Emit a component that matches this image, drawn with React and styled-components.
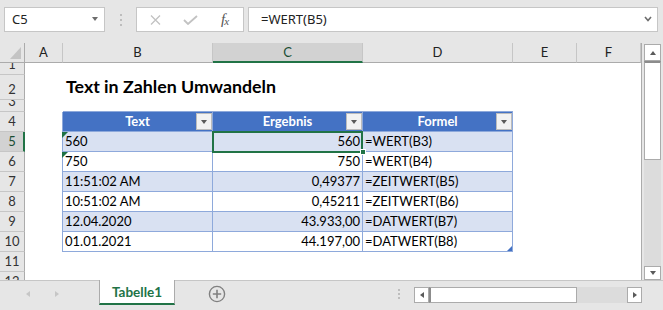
import React from "react";
import styled, { createGlobalStyle, css } from "styled-components";

const GlobalStyle = createGlobalStyle`
  html, body {
    margin: 0;
    padding: 0;
    background: #e6e6e6;
  }
  body {
    overflow: hidden;
    font-family: "Lato", "Liberation Sans", sans-serif;
  }
`;

const tableData = [
  { text: "560", value: "560", formula: "=WERT(B3)", flag: true },
  { text: "750", value: "750", formula: "=WERT(B4)", flag: true },
  { text: "11:51:02 AM", value: "0,49377", formula: "=ZEITWERT(B5)" },
  { text: "10:51:02 AM", value: "0,45211", formula: "=ZEITWERT(B6)" },
  { text: "12.04.2020", value: "43.933,00", formula: "=DATWERT(B7)" },
  { text: "01.01.2021", value: "44.197,00", formula: "=DATWERT(B8)" },
];

const columns = ["A", "B", "C", "D", "E", "F"];

function App() {
  const blanks = (count, key) =>
    Array.from({ length: count }, (_, i) => <Cell key={key + i} />);

  return (
    <Window>
      <GlobalStyle />
      <FormulaBar>
        <NameBox>
          <span>C5</span>
          <Tri $dir="down" $color="#6d6d6d" />
        </NameBox>
        <Grip />
        <FxBox>
          <svg width="11" height="10" viewBox="0 0 11 10">
            <path d="M1 0.5 L10 9.5 M10 0.5 L1 9.5" stroke="#c2c2c2" strokeWidth="1.3" fill="none" />
          </svg>
          <svg width="15" height="10" viewBox="0 0 15 10">
            <path d="M1 5 L5 9 L14 1" stroke="#c2c2c2" strokeWidth="1.8" fill="none" />
          </svg>
          <FxLabel>
            f<sub>x</sub>
          </FxLabel>
        </FxBox>
        <FormulaInput>
          <span>=WERT(B5)</span>
          <svg width="8" height="6" viewBox="0 0 8 6">
            <path d="M1 1 L4 4.5 L7 1" stroke="#6d6d6d" strokeWidth="1.6" fill="none" />
          </svg>
        </FormulaInput>
      </FormulaBar>

      <Main>
        <Sheet>
          <Corner />
          {columns.map((c) => (
            <ColHead key={c} $active={c === "C"}>
              {c}
            </ColHead>
          ))}

          <RowHead>1</RowHead>
          {blanks(6, "r1")}

          <RowHead>2</RowHead>
          <Cell />
          <Title>Text in Zahlen Umwandeln</Title>
          {blanks(4, "r2")}

          <RowHead>3</RowHead>
          {blanks(6, "r3")}

          <RowHead>4</RowHead>
          <Cell />
          {["Text", "Ergebnis", "Formel"].map((h, i) => (
            <TableCell key={h} $head $first={i === 0} $align="center">
              {h}
              <FilterBtn>
                <Tri $dir="down" $color="#5a5a5a" />
              </FilterBtn>
            </TableCell>
          ))}
          {blanks(2, "r4")}

          {tableData.map((row, i) => {
            const n = i + 5;
            const band = i % 2 === 0;
            return (
              <React.Fragment key={n}>
                <RowHead $active={n === 5}>{n}</RowHead>
                <Cell />
                <TableCell $band={band} $first $flag={row.flag}>
                  {row.text}
                </TableCell>
                <TableCell $band={band} $align="right" $selected={n === 5}>
                  {row.value}
                </TableCell>
                <TableCell $band={band} $corner={n === 10}>
                  {row.formula}
                </TableCell>
                {blanks(2, "r" + n)}
              </React.Fragment>
            );
          })}

          <RowHead>11</RowHead>
          {blanks(6, "r11")}
          <RowHead>12</RowHead>
          {blanks(6, "r12")}
        </Sheet>

        <VScroll>
          <ScrollBtn $h={17}>
            <Tri $dir="up" $color="#5a5a5a" />
          </ScrollBtn>
          <VThumb />
          <Track />
          <ScrollBtn $h={14}>
            <Tri $dir="down" $color="#5a5a5a" />
          </ScrollBtn>
        </VScroll>
      </Main>

      <BottomBar>
        <NavArrows>
          <Tri $dir="left" $color="#c6c6c6" />
          <Tri $dir="right" $color="#c6c6c6" />
        </NavArrows>
        <SheetTab>Tabelle1</SheetTab>
        <AddSheet>
          <svg width="18" height="18" viewBox="0 0 18 18">
            <circle cx="9" cy="9" r="7.6" stroke="#808080" strokeWidth="1.4" fill="none" />
            <path d="M9 4.8 V13.2 M4.8 9 H13.2" stroke="#808080" strokeWidth="1.6" />
          </svg>
        </AddSheet>
        <HGrip />
        <HScroll>
          <HBtn>
            <Tri $dir="left" $color="#5a5a5a" />
          </HBtn>
          <HThumb />
          <HTrack />
          <HBtn>
            <Tri $dir="right" $color="#5a5a5a" />
          </HBtn>
        </HScroll>
      </BottomBar>
    </Window>
  );
}

export default App;

const Window = styled.div`
  width: 663px;
  height: 310px;
  display: flex;
  flex-direction: column;
  background: #e6e6e6;
  overflow: hidden;
`;

const Tri = styled.span`
  display: inline-block;
  width: 0;
  height: 0;
  border-style: solid;
  ${(p) =>
    p.$dir === "down" &&
    css`
      border-width: 4px 3.5px 0 3.5px;
      border-color: ${p.$color} transparent transparent transparent;
    `}
  ${(p) =>
    p.$dir === "up" &&
    css`
      border-width: 0 3.5px 4px 3.5px;
      border-color: transparent transparent ${p.$color} transparent;
    `}
  ${(p) =>
    p.$dir === "left" &&
    css`
      border-width: 3.5px 4px 3.5px 0;
      border-color: transparent ${p.$color} transparent transparent;
    `}
  ${(p) =>
    p.$dir === "right" &&
    css`
      border-width: 3.5px 0 3.5px 4px;
      border-color: transparent transparent transparent ${p.$color};
    `}
`;

/* formula bar */

const FormulaBar = styled.div`
  height: 43px;
  box-sizing: border-box;
  padding: 7px 5px 0 4px;
  display: flex;
  align-items: flex-start;
  font-family: "Noto Sans", "Liberation Sans", sans-serif;
  font-size: 13px;
  color: #222;
`;

const NameBox = styled.div`
  width: 101px;
  height: 25px;
  box-sizing: border-box;
  border: 1px solid #c6c6c6;
  background: #fff;
  display: flex;
  align-items: center;
  justify-content: space-between;
  padding: 0 6px 1px 7px;
`;

const Grip = styled.div`
  width: 2px;
  height: 2px;
  margin: 7px 14px 0 15px;
  background: #bdbdbd;
  box-shadow: 0 5px 0 #bdbdbd, 0 10px 0 #bdbdbd;
`;

const FxBox = styled.div`
  width: 108px;
  height: 25px;
  box-sizing: border-box;
  border: 1px solid #c6c6c6;
  background: #fff;
  display: flex;
  align-items: center;
  padding: 0 11px 0 13px;
  gap: 22px;
`;

const FxLabel = styled.span`
  font-family: "Liberation Serif", serif;
  font-style: italic;
  font-size: 15px;
  color: #555;
  margin-left: 1px;
  letter-spacing: -1px;

  sub {
    font-size: 11px;
    vertical-align: -1px;
  }
`;

const FormulaInput = styled.div`
  flex: 1;
  height: 25px;
  margin-left: 4px;
  box-sizing: border-box;
  border: 1px solid #c6c6c6;
  background: #fff;
  display: flex;
  align-items: center;
  justify-content: space-between;
  padding: 0 5px 1px 12px;
`;

/* sheet */

const Main = styled.div`
  height: 237px;
  display: flex;
`;

const Sheet = styled.div`
  width: 641px;
  height: 237px;
  border-right: 1px solid #ababab;
  background: #fff;
  overflow: hidden;
  display: grid;
  grid-template-columns: 25px 38px 150px 150px 150px 64px 64px;
  grid-template-rows: 20px 12px 25px 12px repeat(9, 20px);
  font-family: "Lato", "Liberation Sans", sans-serif;
  font-size: 13px;
  color: #000;
`;

const Corner = styled.div`
  position: relative;
  background: #e6e6e6;
  border-right: 1px solid #ababab;
  border-bottom: 1px solid #ababab;

  &::after {
    content: "";
    position: absolute;
    right: 3px;
    bottom: 3px;
    width: 11px;
    height: 12px;
    background: #c4c4c4;
    clip-path: polygon(100% 0, 100% 100%, 0 100%);
  }
`;

const ColHead = styled.div`
  background: ${(p) => (p.$active ? "#d2d2d2" : "#e6e6e6")};
  border-right: 1px solid #c6c6c6;
  border-bottom: ${(p) => (p.$active ? "2px solid #217346" : "1px solid #ababab")};
  color: ${(p) => (p.$active ? "#1a4d33" : "#222")};
  display: flex;
  align-items: center;
  justify-content: center;
  line-height: 1;
  padding-top: ${(p) => (p.$active ? "1px" : "0")};
`;

const RowHead = styled.div`
  background: ${(p) => (p.$active ? "#d2d2d2" : "#e6e6e6")};
  border-right: ${(p) => (p.$active ? "2px solid #217346" : "1px solid #ababab")};
  border-bottom: 1px solid #c6c6c6;
  color: ${(p) => (p.$active ? "#1a4d33" : "#333")};
  display: flex;
  align-items: flex-end;
  justify-content: center;
  overflow: hidden;
  line-height: 1;
  padding: 0 0 3px ${(p) => (p.$active ? "1px" : "0")};
`;

const Cell = styled.div``;

const Title = styled.div`
  display: flex;
  align-items: flex-end;
  padding: 0 0 4px 3px;
  white-space: nowrap;
  font-weight: 700;
  font-size: 17.8px;
  line-height: 1;
`;

const TableCell = styled.div`
  position: relative;
  display: flex;
  align-items: flex-end;
  justify-content: ${(p) =>
    p.$align === "right" ? "flex-end" : p.$align === "center" ? "center" : "flex-start"};
  padding: 0 2px 3px;
  line-height: 1;
  white-space: nowrap;
  background: ${(p) => (p.$head ? "#4472c4" : p.$band ? "#d9e1f2" : "#fff")};
  color: ${(p) => (p.$head ? "#fff" : "#000")};
  font-weight: ${(p) => (p.$head ? 700 : 400)};
  border-right: 1px solid #8ea9db;
  border-bottom: 1px solid #8ea9db;
  box-shadow: ${(p) =>
    [p.$first && "-1px 0 0 #8ea9db", p.$head && "0 -1px 0 #8ea9db"]
      .filter(Boolean)
      .join(", ") || "none"};

  ${(p) =>
    p.$flag &&
    css`
      &::before {
        content: "";
        position: absolute;
        left: -1px;
        top: 0;
        width: 6px;
        height: 6px;
        background: #1e7145;
        clip-path: polygon(0 0, 100% 0, 0 100%);
      }
    `}

  ${(p) =>
    p.$selected &&
    css`
      &::after {
        content: "";
        position: absolute;
        left: -1px;
        right: -1px;
        top: -1px;
        bottom: -2px;
        border: 2px solid #217346;
        z-index: 2;
      }
      &::before {
        content: "";
        position: absolute;
        right: -4px;
        bottom: -4px;
        width: 6px;
        height: 6px;
        box-sizing: border-box;
        background: #217346;
        border: 1px solid #fff;
        z-index: 3;
      }
    `}

  ${(p) =>
    p.$corner &&
    css`
      &::after {
        content: "";
        position: absolute;
        right: 0;
        bottom: 0;
        width: 5px;
        height: 5px;
        background: #4472c4;
        clip-path: polygon(100% 0, 100% 100%, 0 100%);
      }
    `}
`;

const FilterBtn = styled.div`
  position: absolute;
  right: 0;
  top: 1px;
  width: 16px;
  height: 17px;
  box-sizing: border-box;
  background: #f2f2f2;
  border: 1px solid #bcbcbc;
  display: flex;
  align-items: center;
  justify-content: center;
  padding-top: 1px;
`;

/* vertical scrollbar */

const VScroll = styled.div`
  width: 17px;
  margin: 1px 0 0 2px;
  display: flex;
  flex-direction: column;
`;

const ScrollBtn = styled.div`
  height: ${(p) => p.$h}px;
  box-sizing: border-box;
  border: 1px solid #ababab;
  background: #fff;
  display: flex;
  align-items: center;
  justify-content: center;
`;

const VThumb = styled.div`
  height: 99px;
  box-sizing: border-box;
  border: 1px solid #ababab;
  border-top: 2px solid #8c8c8c;
  background: #fff;
`;

const Track = styled.div`
  flex: 1;
  background: #dcdcdc;
`;

/* bottom bar */

const BottomBar = styled.div`
  height: 30px;
  box-sizing: border-box;
  border-top: 1px solid #c6c6c6;
  display: flex;
  align-items: flex-start;
`;

const NavArrows = styled.div`
  width: 99px;
  display: flex;
  gap: 25px;
  padding: 10px 0 0 26px;
  box-sizing: border-box;
`;

const SheetTab = styled.div`
  width: 76px;
  height: 25px;
  margin-top: -1px;
  box-sizing: border-box;
  background: #fff;
  border-left: 1px solid #ababab;
  border-right: 1px solid #ababab;
  border-bottom: 2px solid #217346;
  display: flex;
  align-items: center;
  justify-content: center;
  font-weight: 700;
  font-size: 13.5px;
  color: #217346;
  padding-top: 1px;
`;

const AddSheet = styled.div`
  margin: 4px 0 0 33px;
  height: 18px;
`;

const HGrip = styled.div`
  width: 2px;
  height: 2px;
  margin: 8px 0 0 172px;
  background: #bdbdbd;
  box-shadow: 0 4px 0 #bdbdbd, 0 8px 0 #bdbdbd;
`;

const HScroll = styled.div`
  width: 228px;
  height: 16px;
  margin: 6px 0 0 14px;
  display: flex;
`;

const HBtn = styled.div`
  width: 15px;
  box-sizing: border-box;
  border: 1px solid #ababab;
  background: #fff;
  display: flex;
  align-items: center;
  justify-content: center;
`;

const HThumb = styled.div`
  width: 148px;
  box-sizing: border-box;
  border: 1px solid #ababab;
  border-left: 2px solid #8c8c8c;
  background: #fff;
`;

const HTrack = styled.div`
  flex: 1;
  background: #dcdcdc;
`;
